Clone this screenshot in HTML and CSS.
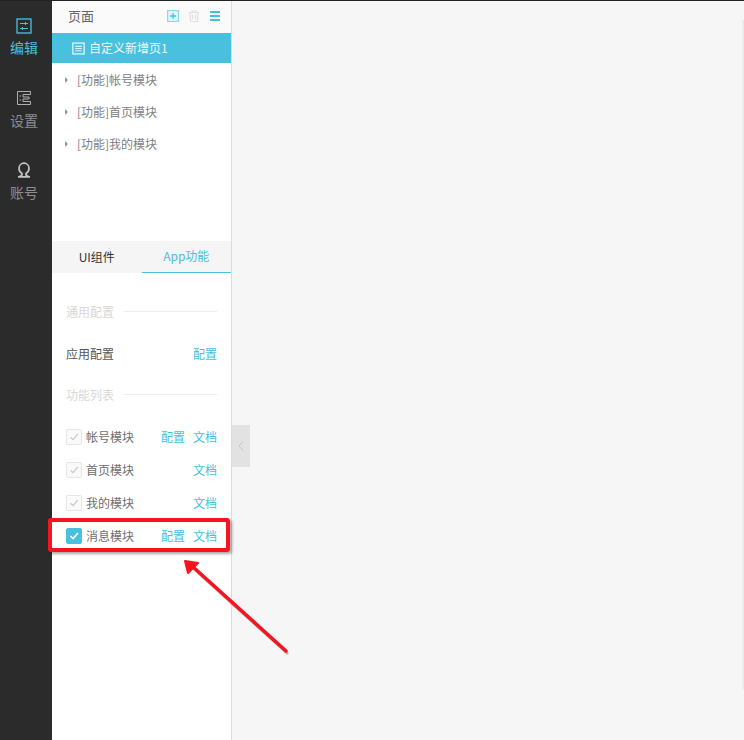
FILE: index.html
```html
<!DOCTYPE html>
<html lang="zh-CN">
<head>
<meta charset="utf-8">
<title>页面编辑</title>
<link rel="stylesheet" href="styles.css">
</head>
<body>
<div class="app">
  <nav class="nav">
    <a class="nav-item active">
      <svg class="nav-icon" viewBox="0 0 16 16" fill="none" stroke="currentColor" stroke-width="1.300"><rect x="1" y="1" width="14" height="14"/><path d="M4 5.500h8M9.500 4v3M4 10.500h8M6.500 9v3" stroke-width="1"/></svg>
      <span>编辑</span>
    </a>
    <a class="nav-item">
      <svg class="nav-icon" viewBox="0 0 16 16" fill="none" stroke="#b0b0b0" stroke-width="1"><path d="M1.500 1.500h13v3H7v2.500h6v2H7v2.500h7.500v3h-13z"/><path d="M3.500 6h1.500M3.500 10h1.500" stroke-width="1.200"/></svg>
      <span>设置</span>
    </a>
    <a class="nav-item">
      <svg class="nav-icon" viewBox="0 0 16 16" fill="none" stroke="#c4c4c4" stroke-width="1.700"><path d="M6.300 11.500C4.200 10.500 3 8.700 3 6.500 3 3.500 5.200 1.200 8 1.200s5 2.300 5 5.300c0 2.200-1.200 4-3.300 5"/><path d="M2 14.800h12M6.300 11.500c0 1.600-1.300 2.800-3.300 3.300M9.700 11.500c0 1.600 1.300 2.800 3.300 3.300"/></svg>
      <span>账号</span>
    </a>
  </nav>
  <aside class="panel">
    <header class="panel-head">
      <span class="panel-title">页面</span>
      <div class="head-tools">
        <svg class="tool" viewBox="0 0 12 12" fill="#e4f7fb" stroke="#8adaee" stroke-width="1.200"><rect x=".6" y=".6" width="10.800" height="10.800"/><path d="M6 3v6M3 6h6" stroke="#48c0de" stroke-width="1.300"/></svg>
        <svg class="tool" viewBox="0 0 12 12" fill="none" stroke="#e0e0e0" stroke-width="1.200"><path d="M1 2.500h10M4 2.500V1h4v1.500M2 2.500l.5 9h7l.5-9M4.500 4.500v5M7.500 4.500v5"/></svg>
        <svg class="tool" viewBox="0 0 12 12" fill="none" stroke="#48c0de" stroke-width="2"><path d="M1 2h10M1 6h10M1 10h10"/></svg>
      </div>
    </header>
    <div class="page-selected">
      <svg class="page-icon" viewBox="0 0 12 12" fill="none" stroke="#dff6fb" stroke-width="1.200"><rect x=".8" y="1" width="10.400" height="10"/><path d="M3 4h6M3 6h6M3 8h6" stroke-width="1"/></svg>
      <span>自定义新增页1</span>
    </div>
    <ul class="page-tree">
      <li class="tree-row"><i class="caret"></i>[功能]帐号模块</li>
      <li class="tree-row"><i class="caret"></i>[功能]首页模块</li>
      <li class="tree-row"><i class="caret"></i>[功能]我的模块</li>
    </ul>
    <div class="tabs">
      <div class="tab">UI组件</div>
      <div class="tab tab-active">App功能</div>
    </div>
    <section class="features">
      <div class="section-title"><span>通用配置</span><i class="rule"></i></div>
      <div class="app-row"><span class="row-name">应用配置</span><a class="link">配置</a></div>
      <div class="section-title"><span>功能列表</span><i class="rule"></i></div>
      <div class="module-list">
        <div class="module">
          <span class="check"><svg viewBox="0 0 16 16" fill="none" stroke="#c9c9c9" stroke-width="1.500"><path d="M4 8.200 7 11l5.500-6.500"/></svg></span>
          <span class="row-name">帐号模块</span><a class="link">配置</a><a class="link">文档</a>
        </div>
        <div class="module">
          <span class="check"><svg viewBox="0 0 16 16" fill="none" stroke="#c9c9c9" stroke-width="1.500"><path d="M4 8.200 7 11l5.500-6.500"/></svg></span>
          <span class="row-name">首页模块</span><a class="link">文档</a>
        </div>
        <div class="module">
          <span class="check"><svg viewBox="0 0 16 16" fill="none" stroke="#c9c9c9" stroke-width="1.500"><path d="M4 8.200 7 11l5.500-6.500"/></svg></span>
          <span class="row-name">我的模块</span><a class="link">文档</a>
        </div>
        <div class="module">
          <span class="check check-on"><svg viewBox="0 0 16 16" fill="none" stroke="#fff" stroke-width="1.800"><path d="M4 8.200 7 11l5.500-6.500"/></svg></span>
          <span class="row-name">消息模块</span><a class="link">配置</a><a class="link">文档</a>
        </div>
      </div>
    </section>
  </aside>
  <main class="canvas">
    <div class="collapse"><svg viewBox="0 0 8 12" fill="none" stroke="#c4c4c4"><path d="M6 1.500 2 6l4 4.500"/></svg></div>
    <div class="edge-shadow"></div>
  </main>
</div>
<div class="callout"></div>
<svg class="arrow" viewBox="0 0 744 740" fill="none">
  <path d="M287 652 193 567" stroke="#000" stroke-opacity=".25" stroke-width="3" transform="translate(1 2)"/>
  <path d="M286 651 192 566" stroke="#f5141f" stroke-width="3.500" stroke-linecap="round"/>
  <path d="M185 561 198 563 188 573Z" fill="#f5141f" stroke="#f5141f" stroke-width="2" stroke-linejoin="round"/>
</svg>
</body>
</html>
```
FILE: styles.css
```css
* { box-sizing: border-box; }
html, body { margin: 0; height: 100%; overflow: hidden; }
body {
  position: relative;
  font-family: "Noto Sans CJK SC", "Liberation Sans", sans-serif;
  font-size: 12px;
  color: #666;
  background: #f6f6f6;
}
.app {
  display: flex;
  height: 740px;
  border-top: 1px solid #222;
}
.nav {
  flex: 0 0 52px;
  background: #2b2b2b;
  padding: 16px 4px 0 0;
  display: flex;
  flex-direction: column;
  gap: 25px;
}
.nav-item {
  display: flex;
  flex-direction: column;
  align-items: center;
  gap: 3px;
  height: 47px;
  color: #8e8e8e;
  font-size: 14px;
  line-height: 22px;
}
.nav-item.active { color: #48c0de; gap: 2px; }
.nav-icon { width: 16px; height: 16px; margin-top: 1px; }
.panel {
  flex: 0 0 180px;
  background: #fff;
  border-right: 1px solid #dcdcdc;
  display: flex;
  flex-direction: column;
}
.panel-head {
  height: 32px;
  background: #fafafa;
  display: flex;
  align-items: center;
  justify-content: space-between;
  padding: 0 10px 2px 16px;
}
.panel-title { font-size: 13px; color: #666; margin-bottom: 2px; }
.head-tools { display: flex; gap: 9px; }
.tool { width: 12px; height: 12px; display: block; }
.page-selected {
  height: 30px;
  background: #48c0de;
  color: #eefafd;
  display: flex;
  align-items: center;
  gap: 4px;
  padding-left: 20px;
  font-size: 12px;
}
.page-selected span { margin-bottom: 2px; }
.page-icon { width: 13px; height: 13px; }
.page-tree {
  list-style: none;
  margin: 0;
  padding: 1px 0 0;
  height: 178px;
}
.tree-row {
  height: 32px;
  display: flex;
  align-items: center;
  padding: 0 0 2px 13px;
  color: #808080;
}
.caret {
  width: 0;
  height: 0;
  margin: 2px 9px 0 0;
  border-left: 3px solid #999;
  border-top: 3px solid transparent;
  border-bottom: 3px solid transparent;
}
.tabs {
  display: flex;
  height: 32px;
  background: #f5f5f5;
  color: #333;
}
.tab {
  flex: 1;
  display: flex;
  align-items: center;
  justify-content: center;
  padding-bottom: 2px;
}
.tab-active {
  color: #48c0de;
  border-bottom: 1px solid #48c0de;
}
.features { padding: 0 14px; }
.section-title {
  height: 18px;
  margin-top: 29px;
  display: flex;
  align-items: center;
  gap: 10px;
  color: #d8d8d8;
}
.rule { flex: 1; height: 1px; background: #ececec; }
.app-row {
  display: flex;
  align-items: center;
  justify-content: space-between;
  height: 18px;
  margin-top: 24px;
  color: #555;
}
.app-row + .section-title { margin-top: 23px; }
.link { color: #48c0de; }
.module-list { margin-top: 17px; display: flex; flex-direction: column; }
.module {
  height: 33px;
  display: flex;
  align-items: center;
  gap: 8px;
}
.module .row-name { flex: 1; margin-left: -4px; color: #6e6e6e; }
.check {
  flex: 0 0 16px;
  width: 16px;
  height: 16px;
  border: 1px solid #e6e6e6;
  border-radius: 2px;
  background: #fafafa;
  display: block;
}
.check svg { width: 14px; height: 14px; display: block; }
.check-on { background: #48c0de; border-color: #48c0de; }
.canvas {
  flex: 1;
  position: relative;
  background: #f6f6f6;
}
.collapse {
  position: absolute;
  left: 0;
  top: 424px;
  width: 18px;
  height: 42px;
  background: #e2e2e2;
  display: flex;
  align-items: center;
  justify-content: center;
}
.collapse svg { width: 8px; height: 12px; }
.edge-shadow {
  position: absolute;
  right: 0;
  top: 19px;
  bottom: 50px;
  width: 2px;
  background: linear-gradient(to right, #f0f0f0, #e8e8e8);
}
.callout {
  position: absolute;
  left: 48px;
  top: 518px;
  width: 182px;
  height: 34px;
  border: 4px solid #f5141f;
  border-radius: 3px;
  box-shadow: 2px 2px 3px rgba(0, 0, 0, .35);
}
.arrow {
  position: absolute;
  left: 0;
  top: 0;
  width: 744px;
  height: 740px;
  pointer-events: none;
}
```
